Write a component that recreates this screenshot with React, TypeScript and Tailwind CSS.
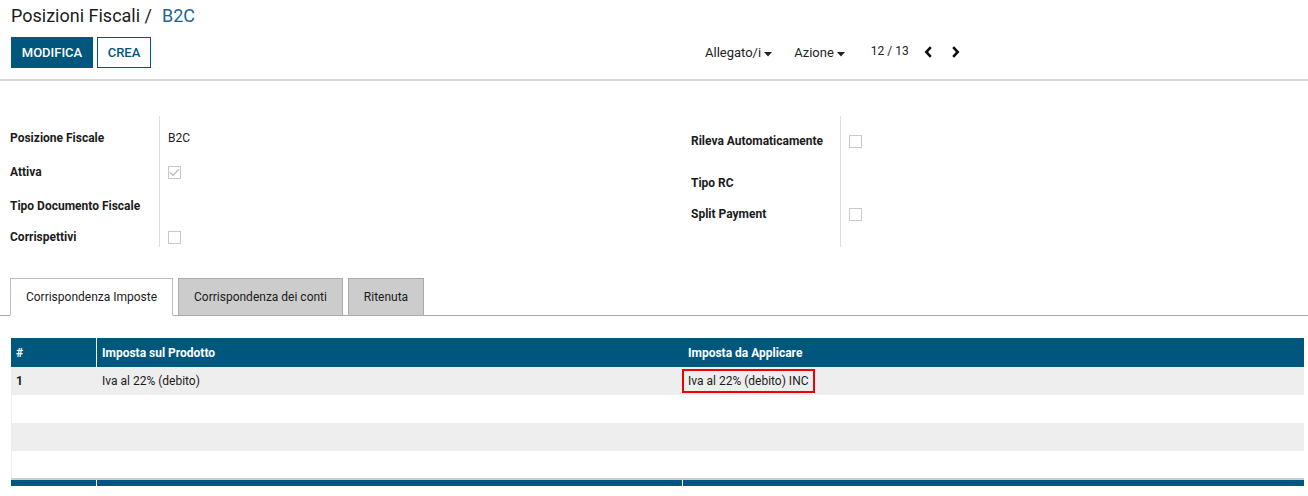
import React from "react";

const Checkbox = ({ checked = false }: { checked?: boolean }) => (
  <span className="flex h-[13px] w-[13px] items-center justify-center border border-[#c8c8c8] bg-white">
    {checked && (
      <svg width="11" height="9" viewBox="0 0 11 9" fill="none">
        <path d="M1 4.5 L4 7.5 L10 1.2" stroke="#b5b5b5" strokeWidth="1.2" />
      </svg>
    )}
  </span>
);

const Caret = () => (
  <svg width="8" height="5" viewBox="0 0 8 5" className="ml-[3px] mt-[2px]">
    <path d="M0 0 L8 0 L4 4.5 Z" fill="#222" />
  </svg>
);

const Chevron = ({ dir }: { dir: "left" | "right" }) => (
  <svg width="9" height="12" viewBox="0 0 9 12" fill="none">
    <path
      d={dir === "left" ? "M6.8 1.2 L2.3 6 L6.8 10.8" : "M2.2 1.2 L6.7 6 L2.2 10.8"}
      stroke="#111"
      strokeWidth="2.6"
    />
  </svg>
);

const leftRows = [
  { label: "Posizione Fiscale", h: "h-[34px]", value: <span>B2C</span> },
  { label: "Attiva", h: "h-[34px]", value: <Checkbox checked /> },
  { label: "Tipo Documento Fiscale", h: "h-[31px]", value: null },
  { label: "Corrispettivi", h: "h-[16px]", value: <Checkbox /> },
];

const rightRows = [
  { label: "Rileva Automaticamente", h: "h-[42px]", value: <Checkbox /> },
  { label: "Tipo RC", h: "h-[31px]", value: null },
  { label: "Split Payment", h: "h-[16px]", value: <Checkbox /> },
];

const FieldGroup = ({
  rows,
  pt,
  pb,
  width,
}: {
  rows: { label: string; h: string; value: React.ReactNode }[];
  pt: string;
  pb: string;
  width: string;
}) => (
  <div className={`flex ${width}`}>
    <div className={`flex w-[149px] flex-col ${pt} ${pb}`}>
      {rows.map((r) => (
        <div key={r.label} className={`${r.h} text-[12px] font-bold leading-[16px] text-[#1b1b1b]`}>
          {r.label}
        </div>
      ))}
    </div>
    <div className={`flex flex-col border-l border-[#dcdcdc] pl-[8px] ${pt} ${pb}`}>
      {rows.map((r) => (
        <div key={r.label} className={`${r.h}`}>
          <div className="flex h-[16px] items-center text-[12px] leading-[16px] text-[#1b1b1b]">{r.value}</div>
        </div>
      ))}
    </div>
  </div>
);

export default function App() {
  return (
    <div className="h-[496px] w-[1308px] overflow-hidden bg-white font-['Roboto','Liberation_Sans',sans-serif] text-[#222]">
      {/* control panel */}
      <div className="h-[81px] border-b-2 border-[#d6d6d6]">
        <div className="pl-[11px] pt-[5px] text-[18px] leading-[22px] text-[#1c1c1c]">
          Posizioni Fiscali /<span className="ml-[10px] text-[#1f6592]">B2C</span>
        </div>
        <div className="mt-[10px] grid grid-cols-2">
          <div className="flex gap-[4px] pl-[11px]">
            <button className="h-[31px] w-[82px] bg-[#00577d] text-[13px] font-medium text-white">MODIFICA</button>
            <button className="h-[31px] w-[54px] border border-[#00577d] bg-white text-[13px] font-medium text-[#00577d]">
              CREA
            </button>
          </div>
          <div className="flex h-[31px] items-center pl-[51px] text-[13px]">
            <span className="flex items-center pt-[1px]">
              Allegato/i
              <Caret />
            </span>
            <span className="ml-[22px] flex items-center pt-[1px]">
              Azione
              <Caret />
            </span>
            <span className="ml-[26px] pb-[3px] text-[12px]">12 / 13</span>
            <span className="ml-[15px] flex items-center gap-[18px] pb-[1px]">
              <Chevron dir="left" />
              <Chevron dir="right" />
            </span>
          </div>
        </div>
      </div>

      {/* form */}
      <div className="mt-[35px] flex h-[131px] pl-[10px]">
        <FieldGroup rows={leftRows} pt="pt-[14px]" pb="pb-[1px]" width="w-[681px]" />
        <FieldGroup rows={rightRows} pt="pt-[17px]" pb="pb-[16px]" width="w-[400px]" />
      </div>

      {/* tabs */}
      <div className="mt-[31px] flex items-end gap-[5px] border-b border-[#ababab] pl-[10px]">
        <div className="-mb-px flex h-[38px] w-[163px] items-center justify-center border border-b-white border-[#bdbdbd] bg-white text-[12px] text-[#1b1b1b]">
          Corrispondenza Imposte
        </div>
        <div className="-mb-px flex h-[38px] w-[165px] items-center justify-center border border-[#ababab] bg-[#cccccc] text-[12px] text-[#1b1b1b]">
          Corrispondenza dei conti
        </div>
        <div className="-mb-px flex h-[38px] w-[76px] items-center justify-center border border-[#ababab] bg-[#cccccc] text-[12px] text-[#1b1b1b]">
          Ritenuta
        </div>
      </div>

      {/* table */}
      <div className="ml-[11px] mt-[22px] w-[1293px] text-[12px]">
        <div className="grid h-[29px] grid-cols-[86px_586px_1fr] items-center bg-[#00577d] font-bold text-white">
          <div className="flex h-full items-center border-r border-white px-[5px]">#</div>
          <div className="px-[5px]">Imposta sul Prodotto</div>
          <div className="px-[5px]">Imposta da Applicare</div>
        </div>
        <div className="grid h-[28px] grid-cols-[86px_586px_1fr] items-center bg-[#eeeeee] text-[#1b1b1b]">
          <div className="px-[5px] font-bold">1</div>
          <div className="px-[5px]">Iva al 22% (debito)</div>
          <div>
            <span className="-ml-px inline-flex h-[24px] items-center border-2 border-[#f00000] px-[4px]">
              Iva al 22% (debito) INC
            </span>
          </div>
        </div>
        <div className="h-[28px] border-l border-[#eeeeee] bg-white" />
        <div className="h-[28px] bg-[#eeeeee]" />
        <div className="h-[27px] border-l border-[#eeeeee] bg-white" />
        <div className="h-[2px] bg-[#cfcfcf]" />
        <div className="grid h-[6px] grid-cols-[86px_586px_1fr] bg-[#00577d]">
          <div className="border-r border-white" />
          <div className="border-r border-white" />
          <div />
        </div>
      </div>
    </div>
  );
}
